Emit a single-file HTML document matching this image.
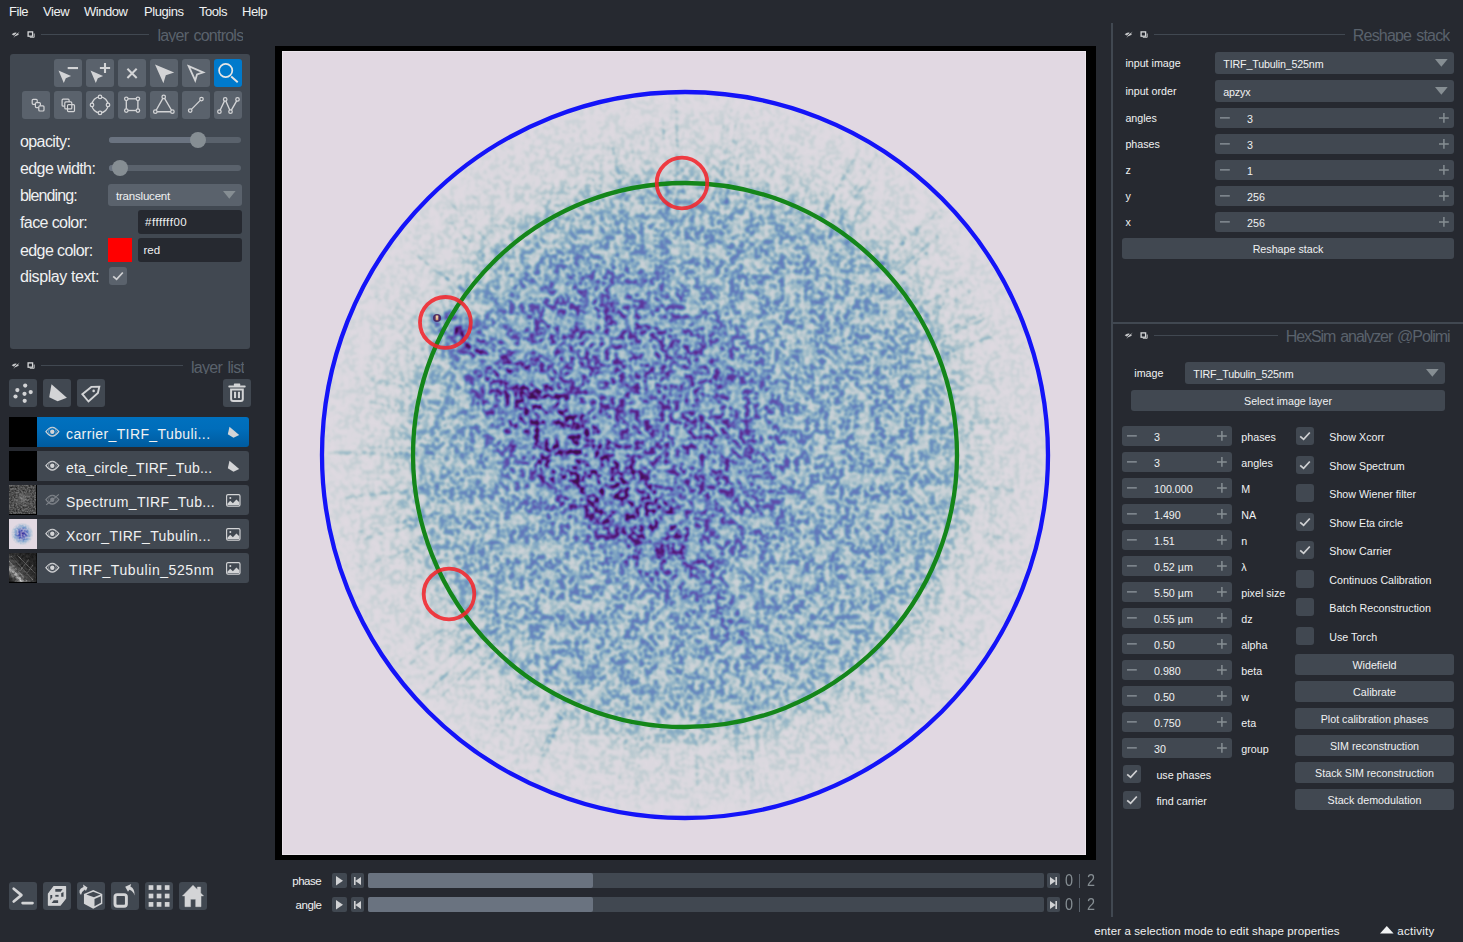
<!DOCTYPE html>
<html lang="en">
<head>
<meta charset="utf-8">
<title>napari</title>
<style>
*{box-sizing:border-box;margin:0;padding:0}
html,body{width:1463px;height:942px;overflow:hidden;background:#262930}
body{position:relative;font-family:"Liberation Sans",sans-serif;color:#f0f1f2;font-size:10.7px}
.a{position:absolute}
.t{position:absolute;white-space:nowrap;line-height:1}
.menu{font-size:13px;top:5px}
.dock{font-size:15.5px;color:#5a626c;overflow:hidden;text-align:right}
.dock span{position:absolute;right:0;top:0;white-space:nowrap;line-height:1}
.hl{background:#414851;height:1px}
.fg{background:#414851;border-radius:3px}
.pb{background:#5a626c;border-radius:3px;width:28px;height:28px}
.lb{font-size:16px;left:20px;letter-spacing:-.6px}
.sm{font-size:12px}
.row{left:37px;width:212px;height:30px;background:#414851;border-radius:0 3px 3px 0}
.row .t{font-size:14px;letter-spacing:.3px;top:8px;left:29px}
.th{left:9px;width:28px;height:30px;background:#000}
.spin,.cmb,.btn{background:#414851;border-radius:3px}
.btn{text-align:center}
.cb{background:#414851;border-radius:3px;width:18px;height:18px}
svg{position:absolute;overflow:visible}
</style>
</head>
<body>

<div class="t " style="left:9px;top:5.3px;font-size:13px;letter-spacing:-.45px">File</div>
<div class="t " style="left:43px;top:5.3px;font-size:13px;letter-spacing:-.45px">View</div>
<div class="t " style="left:84px;top:5.3px;font-size:13px;letter-spacing:-.45px">Window</div>
<div class="t " style="left:144px;top:5.3px;font-size:13px;letter-spacing:-.45px">Plugins</div>
<div class="t " style="left:199px;top:5.3px;font-size:13px;letter-spacing:-.45px">Tools</div>
<div class="t " style="left:242px;top:5.3px;font-size:13px;letter-spacing:-.45px">Help</div>
<div class="a dock" style="left:-16.599999999999994px;top:26px;width:260px;height:15.5px;font-size:16px;letter-spacing:-0.76px"><span style="top:1.6px;word-spacing:1.5px">layer controls</span></div>
<div class="a hl" style="left:41px;top:34px;width:108px;height:1px;"></div>
<svg style="left:12px;top:30.5px" width="24" height="8" viewBox="0 0 24 8"><path d="M-.3 3.3Q3.4 -.4 7 3.3Q3.4 6.6 -.3 3.3Z" fill="#c4c5c7"/><path d="M.8 5.9L6.4 .9" stroke="#262930" stroke-width=".8"/><path d="M1.8 6.3L7.2 1.3" stroke="#c4c5c7" stroke-width=".6"/><rect x="16.1" y=".9" width="4.5" height="4.3" fill="none" stroke="#d6d7d9" stroke-width="1.3"/><path d="M17.8 6.3H22.2V2.5" fill="none" stroke="#c0c1c3" stroke-width="1"/></svg>
<div class="a dock" style="left:-15.800000000000011px;top:358px;width:260px;height:15.5px;font-size:16px;letter-spacing:-0.7px"><span style="top:1.6px;word-spacing:1.5px">layer list</span></div>
<div class="a hl" style="left:41px;top:365px;width:142px;height:1px;"></div>
<svg style="left:12px;top:361.5px" width="24" height="8" viewBox="0 0 24 8"><path d="M-.3 3.3Q3.4 -.4 7 3.3Q3.4 6.6 -.3 3.3Z" fill="#c4c5c7"/><path d="M.8 5.9L6.4 .9" stroke="#262930" stroke-width=".8"/><path d="M1.8 6.3L7.2 1.3" stroke="#c4c5c7" stroke-width=".6"/><rect x="16.1" y=".9" width="4.5" height="4.3" fill="none" stroke="#d6d7d9" stroke-width="1.3"/><path d="M17.8 6.3H22.2V2.5" fill="none" stroke="#c0c1c3" stroke-width="1"/></svg>
<div class="a dock" style="left:1189.5px;top:26.6px;width:260px;height:15.5px;font-size:16px;letter-spacing:-0.82px"><span style="top:1.6px;word-spacing:1.5px">Reshape stack</span></div>
<div class="a hl" style="left:1154px;top:34px;width:191px;height:1px;"></div>
<svg style="left:1124.5px;top:30.5px" width="24" height="8" viewBox="0 0 24 8"><path d="M-.3 3.3Q3.4 -.4 7 3.3Q3.4 6.6 -.3 3.3Z" fill="#c4c5c7"/><path d="M.8 5.9L6.4 .9" stroke="#262930" stroke-width=".8"/><path d="M1.8 6.3L7.2 1.3" stroke="#c4c5c7" stroke-width=".6"/><rect x="16.1" y=".9" width="4.5" height="4.3" fill="none" stroke="#d6d7d9" stroke-width="1.3"/><path d="M17.8 6.3H22.2V2.5" fill="none" stroke="#c0c1c3" stroke-width="1"/></svg>
<div class="a dock" style="left:1189.5px;top:327.8px;width:260px;height:15.5px;font-size:16px;letter-spacing:-1.06px"><span style="top:1.6px;word-spacing:1.5px">HexSim analyzer @Polimi</span></div>
<div class="a hl" style="left:1154px;top:335px;width:124px;height:1px;"></div>
<svg style="left:1124.5px;top:331.5px" width="24" height="8" viewBox="0 0 24 8"><path d="M-.3 3.3Q3.4 -.4 7 3.3Q3.4 6.6 -.3 3.3Z" fill="#c4c5c7"/><path d="M.8 5.9L6.4 .9" stroke="#262930" stroke-width=".8"/><path d="M1.8 6.3L7.2 1.3" stroke="#c4c5c7" stroke-width=".6"/><rect x="16.1" y=".9" width="4.5" height="4.3" fill="none" stroke="#d6d7d9" stroke-width="1.3"/><path d="M17.8 6.3H22.2V2.5" fill="none" stroke="#c0c1c3" stroke-width="1"/></svg>
<div class="a fg" style="left:10px;top:54px;width:240px;height:295px;"></div>
<div class="a pb" style="left:54px;top:59px;width:28px;height:28px;"><svg width="28" height="28" viewBox="0 0 28 28" style="left:0;top:0" ><path d="M4.5 11.5L17.1 17L11.8 19.2L9.8 24Z" fill="#d3d4d6"/><rect x="13.7" y="8" width="10.3" height="2.1" fill="#d3d4d6"/></svg></div>
<div class="a pb" style="left:86px;top:59px;width:28px;height:28px;"><svg width="28" height="28" viewBox="0 0 28 28" style="left:0;top:0" ><path d="M4.5 11.5L17.1 17L11.8 19.2L9.8 24Z" fill="#d3d4d6"/><path d="M13.9 9.05H24.1M19 4V14.1" stroke="#d3d4d6" stroke-width="2.1" fill="none"/></svg></div>
<div class="a pb" style="left:118px;top:59px;width:28px;height:28px;"><svg width="28" height="28" viewBox="0 0 28 28" style="left:0;top:0" ><path d="M9.4 9.7L18.7 19M18.7 9.7L9.4 19" stroke="#d3d4d6" stroke-width="2" fill="none"/></svg></div>
<div class="a pb" style="left:150px;top:59px;width:28px;height:28px;"><svg width="28" height="28" viewBox="0 0 28 28" style="left:0;top:0" ><path d="M5 5.4L24.2 13.4L15.8 16.2L13.4 24.2Z" fill="#d3d4d6"/></svg></div>
<div class="a pb" style="left:182px;top:59px;width:28px;height:28px;"><svg width="28" height="28" viewBox="0 0 28 28" style="left:0;top:0" ><path d="M6.7 7.2L21.2 13.3L15 15.4L13.2 21.4Z" fill="none" stroke="#d3d4d6" stroke-width="1.8" stroke-linejoin="miter"/></svg></div>
<div class="a pb" style="left:214px;top:59px;width:28px;height:28px;background:#007acc"><svg width="28" height="28" viewBox="0 0 28 28" style="left:0;top:0" ><circle cx="11.7" cy="11.55" r="6.6" fill="none" stroke="#e6e6e6" stroke-width="1.7"/><path d="M17.2 17.5L23.7 23.3" stroke="#e6e6e6" stroke-width="1.9"/></svg></div>
<div class="a pb" style="left:22px;top:91px;width:28px;height:28px;"><svg width="28" height="28" viewBox="0 0 28 28" style="left:0;top:0" ><rect x="10.2" y="8.3" width="5" height="5" rx="1" fill="#5a626c" stroke="#d3d4d6" stroke-width="1.2"/><rect x="13.4" y="11.6" width="5" height="5" rx="1" fill="#5a626c" stroke="#d3d4d6" stroke-width="1.2"/><rect x="16.8" y="14.8" width="5.2" height="5.2" rx="1" fill="#5a626c" stroke="#d3d4d6" stroke-width="1.2"/></svg></div>
<div class="a pb" style="left:54px;top:91px;width:28px;height:28px;"><svg width="28" height="28" viewBox="0 0 28 28" style="left:0;top:0" ><rect x="8.1" y="8.2" width="7" height="7" rx="1" fill="#5a626c" stroke="#d3d4d6" stroke-width="1.2"/><rect x="10.8" y="10.9" width="7" height="7" rx="1" fill="#4a515a" stroke="#d3d4d6" stroke-width="1.2"/><rect x="13.5" y="13.6" width="7" height="7" rx="1" fill="none" stroke="#d3d4d6" stroke-width="1.2"/></svg></div>
<div class="a pb" style="left:86px;top:91px;width:28px;height:28px;"><svg width="28" height="28" viewBox="0 0 28 28" style="left:0;top:0" ><circle cx="14" cy="13.9" r="8" fill="none" stroke="#d3d4d6" stroke-width="1.35"/><circle cx="14" cy="5.9" r="1.75" fill="#5a626c" stroke="#d3d4d6" stroke-width="1.25"/><circle cx="6" cy="13.9" r="1.75" fill="#5a626c" stroke="#d3d4d6" stroke-width="1.25"/><circle cx="22" cy="13.9" r="1.75" fill="#5a626c" stroke="#d3d4d6" stroke-width="1.25"/><circle cx="14" cy="21.9" r="1.75" fill="#5a626c" stroke="#d3d4d6" stroke-width="1.25"/></svg></div>
<div class="a pb" style="left:118px;top:91px;width:28px;height:28px;"><svg width="28" height="28" viewBox="0 0 28 28" style="left:0;top:0" ><rect x="8.3" y="7.8" width="11.6" height="11.7" fill="none" stroke="#d3d4d6" stroke-width="1.35"/><circle cx="8.3" cy="7.8" r="1.75" fill="#5a626c" stroke="#d3d4d6" stroke-width="1.25"/><circle cx="19.9" cy="7.8" r="1.75" fill="#5a626c" stroke="#d3d4d6" stroke-width="1.25"/><circle cx="8.3" cy="19.5" r="1.75" fill="#5a626c" stroke="#d3d4d6" stroke-width="1.25"/><circle cx="19.9" cy="19.5" r="1.75" fill="#5a626c" stroke="#d3d4d6" stroke-width="1.25"/></svg></div>
<div class="a pb" style="left:150px;top:91px;width:28px;height:28px;"><svg width="28" height="28" viewBox="0 0 28 28" style="left:0;top:0" ><path d="M13.7 5.9L5.3 20.7H22.4Z" fill="none" stroke="#d3d4d6" stroke-width="1.35"/><circle cx="13.7" cy="5.9" r="1.75" fill="#5a626c" stroke="#d3d4d6" stroke-width="1.25"/><circle cx="5.3" cy="20.7" r="1.75" fill="#5a626c" stroke="#d3d4d6" stroke-width="1.25"/><circle cx="22.4" cy="20.7" r="1.75" fill="#5a626c" stroke="#d3d4d6" stroke-width="1.25"/></svg></div>
<div class="a pb" style="left:182px;top:91px;width:28px;height:28px;"><svg width="28" height="28" viewBox="0 0 28 28" style="left:0;top:0" ><path d="M19.5 8.1L8.2 19.6" fill="none" stroke="#d3d4d6" stroke-width="1.35"/><circle cx="19.5" cy="8.1" r="1.75" fill="#5a626c" stroke="#d3d4d6" stroke-width="1.25"/><circle cx="8.2" cy="19.6" r="1.75" fill="#5a626c" stroke="#d3d4d6" stroke-width="1.25"/></svg></div>
<div class="a pb" style="left:214px;top:91px;width:28px;height:28px;"><svg width="28" height="28" viewBox="0 0 28 28" style="left:0;top:0" ><path d="M5.4 20.7L11.2 8.4L16.5 20.7L23.5 8.4" fill="none" stroke="#d3d4d6" stroke-width="1.35"/><circle cx="5.4" cy="20.7" r="1.75" fill="#5a626c" stroke="#d3d4d6" stroke-width="1.25"/><circle cx="11.2" cy="8.4" r="1.75" fill="#5a626c" stroke="#d3d4d6" stroke-width="1.25"/><circle cx="16.5" cy="20.7" r="1.75" fill="#5a626c" stroke="#d3d4d6" stroke-width="1.25"/><circle cx="23.5" cy="8.4" r="1.75" fill="#5a626c" stroke="#d3d4d6" stroke-width="1.25"/></svg></div>
<div class="t " style="left:20px;top:133.5px;font-size:16px;letter-spacing:-.6px">opacity:</div>
<div class="t " style="left:20px;top:160.7px;font-size:16px;letter-spacing:-.6px">edge width:</div>
<div class="t " style="left:20px;top:188.1px;font-size:16px;letter-spacing:-.92px">blending:</div>
<div class="t " style="left:20px;top:214.9px;font-size:16px;letter-spacing:-.6px">face color:</div>
<div class="t " style="left:20px;top:243.0px;font-size:16px;letter-spacing:-.6px">edge color:</div>
<div class="t " style="left:20px;top:269.0px;font-size:16px;letter-spacing:-.42px">display text:</div>
<div class="a " style="left:109px;top:137px;width:132px;height:6px;background:#5a626c;border-radius:3px"></div>
<div class="a " style="left:109px;top:137px;width:89px;height:6px;background:#6a7380;border-radius:3px"></div>
<div class="a " style="left:190px;top:132px;width:16px;height:16px;background:#868e93;border-radius:8px"></div>
<div class="a " style="left:109px;top:165px;width:132px;height:6px;background:#5a626c;border-radius:3px"></div>
<div class="a " style="left:109px;top:165px;width:11px;height:6px;background:#6a7380;border-radius:3px"></div>
<div class="a " style="left:112px;top:160px;width:16px;height:16px;background:#868e93;border-radius:8px"></div>
<div class="a " style="left:108px;top:184px;width:134px;height:22px;background:#5a626c;border-radius:3px"></div>
<div class="t " style="left:116px;top:190.5px;font-size:11.5px;letter-spacing:-.2px">translucent</div>
<svg style="left:223px;top:191px" width="13" height="8"><path d="M0 0H12.6L6.3 7.7Z" fill="#868e93"/></svg>
<div class="a " style="left:138px;top:210px;width:104px;height:24px;background:#262930;border-radius:3px"></div>
<div class="t " style="left:145px;top:217.2px;font-size:11.5px;letter-spacing:.55px">#ffffff00</div>
<div class="a " style="left:108px;top:238px;width:24px;height:24px;background:#ff0000"></div>
<div class="a " style="left:138px;top:238px;width:104px;height:24px;background:#262930;border-radius:3px"></div>
<div class="t " style="left:143.5px;top:245.2px;font-size:11.5px;">red</div>
<div class="a " style="left:109px;top:267px;width:18px;height:18px;background:#5a626c;border-radius:3px"><svg style="left:3px;top:4px" width="12" height="10"><path d="M1.2 5.3L4.6 8.3L10.8 1.5" fill="none" stroke="#d0d1d3" stroke-width="1.75"/></svg></div>
<div class="a fg" style="left:9px;top:379px;width:28px;height:28px;"><svg width="28" height="28" viewBox="0 0 28 28" style="left:0;top:0" ><circle cx="16.2" cy="6.6" r="2.1" fill="#d3d4d6"/><circle cx="8.35" cy="11.1" r="2.1" fill="#d3d4d6"/><circle cx="21.7" cy="13.1" r="2.1" fill="#d3d4d6"/><circle cx="15.5" cy="14.8" r="2.1" fill="#d3d4d6"/><circle cx="6.5" cy="17.5" r="2.1" fill="#d3d4d6"/><circle cx="15.7" cy="21.8" r="2.1" fill="#d3d4d6"/></svg></div>
<div class="a fg" style="left:43px;top:379px;width:28px;height:28px;"><svg width="28" height="28" viewBox="0 0 28 28" style="left:0;top:0" ><path d="M8.5 5.2L23.9 18.8L14.6 22.2L6.2 18.3Z" fill="#d3d4d6"/></svg></div>
<div class="a fg" style="left:77px;top:379px;width:28px;height:28px;"><svg width="28" height="28" viewBox="0 0 28 28" style="left:0;top:0" ><path d="M5.3 15.2L14.3 7.9L22.3 7.8L20.9 14L11.5 22.5Z" fill="none" stroke="#d3d4d6" stroke-width="1.9" stroke-linejoin="miter"/><circle cx="16.65" cy="11.9" r="1.3" fill="#d3d4d6"/></svg></div>
<div class="a fg" style="left:223px;top:379px;width:28px;height:28px;"><svg width="28" height="28" viewBox="0 0 28 28" style="left:0;top:0" ><rect x="10.9" y="4.6" width="6.3" height="2.4" rx=".6" fill="#d3d4d6"/><rect x="5.3" y="6.6" width="17.4" height="1.9" rx=".9" fill="#d3d4d6"/><path d="M8.1 10.4H19.8V19.9Q19.8 21.9 17.8 21.9H10.1Q8.1 21.9 8.1 19.9Z" fill="none" stroke="#d3d4d6" stroke-width="2"/><rect x="11" y="12.8" width="2.1" height="6.3" fill="#d3d4d6"/><rect x="14.9" y="12.8" width="2.1" height="6.3" fill="#d3d4d6"/></svg></div>
<div class="a " style="left:9px;top:417px;width:28px;height:30px;background:#000"><!--th0--></div>
<div class="a row" style="top:417px;background:linear-gradient(#0071bf,#006dba 40%,#005b9f)"><div class="t" style="left:29px;top:9.7px;letter-spacing:0.4px">carrier_TIRF_Tubuli...</div><svg width="16" height="12" viewBox="0 0 16 12" style="left:7.5px;top:9.2px;opacity:1"><path d="M0.9 5.7Q7.3 -3.2 13.8 5.7Q7.3 14.6 0.9 5.7Z" fill="none" stroke="#d3d4d6" stroke-width="1.15"/><circle cx="7.35" cy="5.7" r="3.9" fill="none" stroke="#d3d4d6" stroke-width=".8" opacity=".6"/><circle cx="7.3" cy="5.8" r="2.2" fill="#d3d4d6"/></svg><svg width="14" height="13" viewBox="0 0 14 13" style="left:190px;top:8.5px"><path d="M2.5 .8L12.2 8.9L6.5 11.7L.8 8.3Z" fill="#d3d4d6"/></svg></div>
<div class="a " style="left:9px;top:451px;width:28px;height:30px;background:#000"><!--th1--></div>
<div class="a row" style="top:451px;"><div class="t" style="left:29px;top:9.7px;letter-spacing:0.2px">eta_circle_TIRF_Tub...</div><svg width="16" height="12" viewBox="0 0 16 12" style="left:7.5px;top:9.2px;opacity:1"><path d="M0.9 5.7Q7.3 -3.2 13.8 5.7Q7.3 14.6 0.9 5.7Z" fill="none" stroke="#d3d4d6" stroke-width="1.15"/><circle cx="7.35" cy="5.7" r="3.9" fill="none" stroke="#d3d4d6" stroke-width=".8" opacity=".6"/><circle cx="7.3" cy="5.8" r="2.2" fill="#d3d4d6"/></svg><svg width="14" height="13" viewBox="0 0 14 13" style="left:190px;top:8.5px"><path d="M2.5 .8L12.2 8.9L6.5 11.7L.8 8.3Z" fill="#d3d4d6"/></svg></div>
<div class="a " style="left:9px;top:485px;width:28px;height:30px;background:#000"><svg width="28" height="30" viewBox="0 0 28 30" style="left:0;top:0"><defs>
<filter id="fS" x="0" y="0" width="100%" height="100%" color-interpolation-filters="sRGB"><feTurbulence type="fractalNoise" baseFrequency=".55" numOctaves="2" seed="5"/><feColorMatrix type="matrix" values=".55 0 0 0 .03 .55 0 0 0 .03 .55 0 0 0 .03 0 0 0 0 1"/></filter>
<radialGradient id="gS" cx=".5" cy=".48" r=".5"><stop offset="0" stop-color="#aaa" stop-opacity=".55"/><stop offset=".3" stop-color="#888" stop-opacity=".22"/><stop offset="1" stop-color="#555" stop-opacity="0"/></radialGradient></defs>
<rect width="27" height="28.6" filter="url(#fS)"/><rect width="27" height="28.6" fill="url(#gS)"/></svg></div>
<div class="a row" style="top:485px;"><div class="t" style="left:29px;top:9.7px;letter-spacing:0.36px">Spectrum_TIRF_Tub...</div><svg width="16" height="12" viewBox="0 0 16 12" style="left:7.5px;top:9.2px;opacity:0.42"><path d="M0.9 5.7Q7.3 -3.2 13.8 5.7Q7.3 14.6 0.9 5.7Z" fill="none" stroke="#d3d4d6" stroke-width="1.15"/><circle cx="7.35" cy="5.7" r="3.9" fill="none" stroke="#d3d4d6" stroke-width=".8" opacity=".6"/><circle cx="7.3" cy="5.8" r="2.2" fill="#d3d4d6"/><path d="M1.2 10.8L13.8 .4" stroke="#d3d4d6" stroke-width="1.1"/></svg><svg width="15" height="13" viewBox="0 0 15 13" style="left:188.6px;top:8.6px"><rect x=".6" y=".6" width="13.4" height="11.6" rx="1.4" fill="none" stroke="#d3d4d6" stroke-width="1.15"/><circle cx="4.3" cy="3.9" r="1" fill="#d3d4d6"/><path d="M1.4 11.2V9.8L4.2 6.8L6.9 9.2L10.4 5.4L13.3 8.3V11.2Z" fill="#d3d4d6"/></svg></div>
<div class="a " style="left:9px;top:519px;width:28px;height:30px;background:#000"><svg width="28" height="30" viewBox="0 0 28 30" style="left:0;top:0"><defs>
<filter id="fX" x="0" y="0" width="100%" height="100%" color-interpolation-filters="sRGB"><feTurbulence type="fractalNoise" baseFrequency=".5" numOctaves="2" seed="8" result="n"/><feColorMatrix in="n" type="matrix" values="0 0 0 0 0 0 0 0 0 0 0 0 0 0 0 3 0 0 0 -1.0" result="a"/><feComposite in="SourceGraphic" in2="a" operator="in"/></filter>
<radialGradient id="gX" cx=".48" cy=".5" r=".5"><stop offset="0" stop-color="#3a2a98"/><stop offset=".35" stop-color="#4a5ab8"/><stop offset=".65" stop-color="#7aa2cc" stop-opacity=".9"/><stop offset="1" stop-color="#a5c4d4" stop-opacity="0"/></radialGradient></defs>
<rect width="28" height="30" fill="#e2d9e2"/><circle cx="13.6" cy="15" r="11.5" fill="url(#gX)" opacity=".45"/><circle cx="13.6" cy="15" r="11.5" fill="url(#gX)" filter="url(#fX)"/></svg></div>
<div class="a row" style="top:519px;"><div class="t" style="left:29px;top:9.7px;letter-spacing:0.37px">Xcorr_TIRF_Tubulin...</div><svg width="16" height="12" viewBox="0 0 16 12" style="left:7.5px;top:9.2px;opacity:1"><path d="M0.9 5.7Q7.3 -3.2 13.8 5.7Q7.3 14.6 0.9 5.7Z" fill="none" stroke="#d3d4d6" stroke-width="1.15"/><circle cx="7.35" cy="5.7" r="3.9" fill="none" stroke="#d3d4d6" stroke-width=".8" opacity=".6"/><circle cx="7.3" cy="5.8" r="2.2" fill="#d3d4d6"/></svg><svg width="15" height="13" viewBox="0 0 15 13" style="left:188.6px;top:8.6px"><rect x=".6" y=".6" width="13.4" height="11.6" rx="1.4" fill="none" stroke="#d3d4d6" stroke-width="1.15"/><circle cx="4.3" cy="3.9" r="1" fill="#d3d4d6"/><path d="M1.4 11.2V9.8L4.2 6.8L6.9 9.2L10.4 5.4L13.3 8.3V11.2Z" fill="#d3d4d6"/></svg></div>
<div class="a " style="left:9px;top:553px;width:28px;height:30px;background:#000"><svg width="28" height="30" viewBox="0 0 28 30" style="left:0;top:0"><defs>
<linearGradient id="gT" x1="1" y1="0" x2="0" y2="1"><stop offset="0" stop-color="#1a1a1a"/><stop offset=".5" stop-color="#2e2e2e"/><stop offset=".78" stop-color="#777"/><stop offset=".9" stop-color="#333"/><stop offset="1" stop-color="#0c0c0c"/></linearGradient>
<filter id="fT" x="0" y="0" width="100%" height="100%" color-interpolation-filters="sRGB"><feTurbulence type="fractalNoise" baseFrequency=".4" numOctaves="2" seed="2" result="n"/><feColorMatrix in="n" type="matrix" values=".9 0 0 0 .1 .9 0 0 0 .1 .9 0 0 0 .1 0 0 0 0 1" result="g"/><feComposite in="SourceGraphic" in2="g" operator="arithmetic" k1="1.3" k2=".3"/></filter></defs>
<g filter="url(#fT)"><rect width="27.4" height="29" fill="url(#gT)"/><g stroke="#aaa" stroke-width=".7" opacity=".5"><path d="M0 8L18 28M2 3L24 27M8 2L26 20M20 6L11 18M24 12L18 20"/></g><path d="M0 14L14 29" stroke="#ccc" stroke-width="2.5" opacity=".5"/></g></svg></div>
<div class="a row" style="top:553px;"><div class="t" style="left:32px;top:9.7px;letter-spacing:0.58px">TIRF_Tubulin_525nm</div><svg width="16" height="12" viewBox="0 0 16 12" style="left:7.5px;top:9.2px;opacity:1"><path d="M0.9 5.7Q7.3 -3.2 13.8 5.7Q7.3 14.6 0.9 5.7Z" fill="none" stroke="#d3d4d6" stroke-width="1.15"/><circle cx="7.35" cy="5.7" r="3.9" fill="none" stroke="#d3d4d6" stroke-width=".8" opacity=".6"/><circle cx="7.3" cy="5.8" r="2.2" fill="#d3d4d6"/></svg><svg width="15" height="13" viewBox="0 0 15 13" style="left:188.6px;top:8.6px"><rect x=".6" y=".6" width="13.4" height="11.6" rx="1.4" fill="none" stroke="#d3d4d6" stroke-width="1.15"/><circle cx="4.3" cy="3.9" r="1" fill="#d3d4d6"/><path d="M1.4 11.2V9.8L4.2 6.8L6.9 9.2L10.4 5.4L13.3 8.3V11.2Z" fill="#d3d4d6"/></svg></div>
<div class="a fg" style="left:9px;top:882px;width:28px;height:28px;"><svg width="28" height="28" viewBox="0 0 28 28" style="left:0;top:0" ><path d="M4.7 6.7L12.4 13.1L4.7 19.5M13.6 21.1H23.5" fill="none" stroke="#d3d4d6" stroke-width="2.7" stroke-linecap="round" stroke-linejoin="round"/></svg></div>
<div class="a fg" style="left:43px;top:882px;width:28px;height:28px;"><svg width="28" height="28" viewBox="0 0 28 28" style="left:0;top:0" ><path d="M5.5 11.8L10.9 4.6H22.5V16.4L17.2 23.2H5.5Z" fill="#d3d4d6" stroke="#d3d4d6" stroke-width="1.3" stroke-linejoin="round"/><g fill="#414851"><path d="M12.3 7H19.6L17.7 9.7H12.3Z"/><path d="M12.3 12.9H15.6V14.7H12.3Z"/><path d="M18.2 11.3L20.5 10V14.7H18.2Z"/><path d="M7.3 13.1H9.2V15.2L7.3 18.3Z"/><path d="M10.7 18.2H15.1V21.1H8.6Z"/></g></svg></div>
<div class="a fg" style="left:77px;top:882px;width:28px;height:28px;"><svg width="28" height="28" viewBox="0 0 28 28" style="left:0;top:0" ><path d="M6.95 12L16.25 8L25.3 12V21.7L16.25 26.8L6.95 21.7Z" fill="#d3d4d6"/><path d="M16.25 9.85L23.5 12.4L16.95 15.2L9.3 12.4Z" fill="#414851"/><path d="M17.5 17.05L23.9 14.3V20.8L17.5 24.3Z" fill="#414851"/><path d="M4 13Q-.2 7.6 6.5 4.9L6 2.5L10.5 5.5L8.9 9L7.9 7.4Q5 9 4 13Z" fill="#d3d4d6"/></svg></div>
<div class="a fg" style="left:111px;top:882px;width:28px;height:28px;"><svg width="28" height="28" viewBox="0 0 28 28" style="left:0;top:0" ><rect x="4" y="12.6" width="11.4" height="11.6" rx="2.2" fill="none" stroke="#d3d4d6" stroke-width="2.9"/><path d="M23.6 13.4Q22 8.8 18.4 7.8L17 9.8L14.2 4.8L20.2 2L19.4 4.6Q23.8 6.6 23.6 13.4Z" fill="#d3d4d6"/></svg></div>
<div class="a fg" style="left:145px;top:882px;width:28px;height:28px;"><svg width="28" height="28" viewBox="0 0 28 28" style="left:0;top:0" ><rect x="3.65" y="3.2" width="4.7" height="4.7" fill="#d3d4d6"/><rect x="3.65" y="11.65" width="4.7" height="4.7" fill="#d3d4d6"/><rect x="3.65" y="20.05" width="4.7" height="4.7" fill="#d3d4d6"/><rect x="11.7" y="3.2" width="4.7" height="4.7" fill="#d3d4d6"/><rect x="11.7" y="11.65" width="4.7" height="4.7" fill="#d3d4d6"/><rect x="11.7" y="20.05" width="4.7" height="4.7" fill="#d3d4d6"/><rect x="19.8" y="3.2" width="4.7" height="4.7" fill="#d3d4d6"/><rect x="19.8" y="11.65" width="4.7" height="4.7" fill="#d3d4d6"/><rect x="19.8" y="20.05" width="4.7" height="4.7" fill="#d3d4d6"/></svg></div>
<div class="a fg" style="left:179px;top:882px;width:28px;height:28px;"><svg width="28" height="28" viewBox="0 0 28 28" style="left:0;top:0" ><path d="M14 3.2L18.3 7.5V5H21.7V11L24.6 13.95H22.05V24.7H16.65V17.2H11.6V24.7H5.9V13.95H3.4Z" fill="#d3d4d6" stroke="#d3d4d6" stroke-width=".4" stroke-linejoin="round"/></svg></div>
<div class="a " style="left:275px;top:46px;width:821px;height:814px;background:#000"></div>
<svg style="left:282px;top:51px;overflow:hidden" width="804" height="804" viewBox="282 51 804 804">
<defs>
<radialGradient id="gHaze" cx="685" cy="455" r="372" gradientUnits="userSpaceOnUse">
<stop offset="0" stop-color="#fff" stop-opacity=".125"/>
<stop offset=".54" stop-color="#fff" stop-opacity=".12"/>
<stop offset=".63" stop-color="#fff" stop-opacity=".112"/>
<stop offset=".70" stop-color="#fff" stop-opacity=".095"/>
<stop offset=".753" stop-color="#fff" stop-opacity=".068"/>
<stop offset=".806" stop-color="#fff" stop-opacity=".039"/>
<stop offset=".914" stop-color="#fff" stop-opacity=".028"/>
<stop offset=".974" stop-color="#fff" stop-opacity=".02"/>
<stop offset=".978" stop-color="#fff" stop-opacity="0"/>
</radialGradient>
<radialGradient id="gBlob">
<stop offset="0" stop-color="#fff" stop-opacity=".085"/>
<stop offset=".6" stop-color="#fff" stop-opacity=".078"/>
<stop offset=".85" stop-color="#fff" stop-opacity=".04"/>
<stop offset="1" stop-color="#fff" stop-opacity="0"/>
</radialGradient>
<radialGradient id="gRidge">
<stop offset="0" stop-color="#fff" stop-opacity=".05"/>
<stop offset=".6" stop-color="#fff" stop-opacity=".045"/>
<stop offset=".85" stop-color="#fff" stop-opacity=".035"/>
<stop offset="1" stop-color="#fff" stop-opacity="0"/>
</radialGradient>
<radialGradient id="gPk">
<stop offset="0" stop-color="#fff" stop-opacity=".17"/>
<stop offset=".4" stop-color="#fff" stop-opacity=".09"/>
<stop offset="1" stop-color="#fff" stop-opacity="0"/>
</radialGradient>
<filter id="tw" x="274" y="43" width="820" height="820" filterUnits="userSpaceOnUse" color-interpolation-filters="sRGB">
<feTurbulence type="fractalNoise" baseFrequency="0.2" numOctaves="2" seed="3" result="n"/>
<feTurbulence type="fractalNoise" baseFrequency="0.07" numOctaves="2" seed="11" result="c"/>
<feColorMatrix in="n" type="matrix" values="2.7 0 0 0 -0.85  2.7 0 0 0 -0.85  2.7 0 0 0 -0.85  0 0 0 0 1" result="ng"/>
<feColorMatrix in="c" type="matrix" values="2.4 0 0 0 -0.7  2.4 0 0 0 -0.7  2.4 0 0 0 -0.7  0 0 0 0 1" result="cg"/>
<feComponentTransfer in="ng" result="ngg"><feFuncR type="gamma" exponent="1.45"/><feFuncG type="gamma" exponent="1.45"/><feFuncB type="gamma" exponent="1.45"/></feComponentTransfer>
<feComposite in="ngg" in2="cg" operator="arithmetic" k1="1.5" k2=".35" k3=".1" k4="0" result="nn"/>
<feComposite in="SourceGraphic" in2="nn" operator="arithmetic" k1="3.3" k2="0.75" k3="0" k4="0" result="m0"/>
<feGaussianBlur in="m0" stdDeviation="0.9" result="m"/>
<feComponentTransfer in="m">
<feFuncR type="table" tableValues="0.886 0.872 0.855 0.828 0.800 0.768 0.727 0.691 0.650 0.615 0.583 0.548 0.520 0.495 0.468 0.448 0.428 0.414 0.402 0.391 0.384 0.379 0.375 0.373 0.371 0.370 0.368 0.366 0.363 0.358 0.351 0.341 0.327 0.311 0.293 0.270 0.250 0.231 0.212 0.200 0.185"/>
<feFuncG type="table" tableValues="0.850 0.852 0.848 0.837 0.825 0.810 0.790 0.772 0.750 0.730 0.710 0.685 0.664 0.642 0.615 0.592 0.565 0.541 0.516 0.487 0.461 0.435 0.404 0.377 0.345 0.316 0.288 0.254 0.226 0.198 0.166 0.141 0.116 0.099 0.086 0.075 0.070 0.067 0.066 0.069 0.079"/>
<feFuncB type="table" tableValues="0.888 0.882 0.873 0.859 0.846 0.833 0.817 0.805 0.794 0.786 0.779 0.773 0.768 0.764 0.759 0.756 0.751 0.747 0.743 0.737 0.731 0.724 0.714 0.704 0.691 0.677 0.661 0.640 0.619 0.594 0.561 0.529 0.487 0.447 0.407 0.361 0.324 0.291 0.258 0.235 0.213"/>
</feComponentTransfer>
</filter>
</defs>
<g filter="url(#tw)">
<rect x="274" y="43" width="820" height="820" fill="#000"/>
<circle cx="685" cy="455" r="372" fill="url(#gHaze)"/>
<g stroke="#fff" stroke-linecap="round"><path d="M526 644L464 717" stroke-opacity="0.014" stroke-width="2.8"/><path d="M521 634L458 703" stroke-opacity="0.013" stroke-width="2.6"/><path d="M578 675L539 755" stroke-opacity="0.031" stroke-width="1.8"/><path d="M533 676L483 748" stroke-opacity="0.025" stroke-width="2.5"/><path d="M449 511L343 536" stroke-opacity="0.019" stroke-width="1.9"/><path d="M563 678L517 762" stroke-opacity="0.016" stroke-width="3.0"/><path d="M468 592L399 636" stroke-opacity="0.013" stroke-width="1.6"/><path d="M536 681L501 733" stroke-opacity="0.019" stroke-width="3.0"/><path d="M498 627L428 691" stroke-opacity="0.028" stroke-width="2.1"/><path d="M471 609L399 661" stroke-opacity="0.029" stroke-width="2.2"/><path d="M446 511L361 531" stroke-opacity="0.029" stroke-width="1.9"/><path d="M501 612L424 679" stroke-opacity="0.030" stroke-width="2.9"/><path d="M445 538L359 567" stroke-opacity="0.026" stroke-width="2.9"/><path d="M480 643L423 695" stroke-opacity="0.023" stroke-width="3.2"/><path d="M569 700L538 765" stroke-opacity="0.035" stroke-width="3.6"/><path d="M527 658L474 726" stroke-opacity="0.013" stroke-width="2.7"/><path d="M557 664L520 726" stroke-opacity="0.030" stroke-width="1.8"/><path d="M534 664L478 741" stroke-opacity="0.014" stroke-width="2.6"/><path d="M462 624L406 667" stroke-opacity="0.032" stroke-width="2.2"/><path d="M503 635L434 704" stroke-opacity="0.034" stroke-width="1.9"/><path d="M553 668L513 731" stroke-opacity="0.023" stroke-width="3.0"/><path d="M541 648L486 722" stroke-opacity="0.020" stroke-width="2.9"/><path d="M423 523L359 540" stroke-opacity="0.026" stroke-width="3.2"/><path d="M566 709L538 771" stroke-opacity="0.032" stroke-width="3.5"/><path d="M506 641L463 685" stroke-opacity="0.027" stroke-width="1.7"/><path d="M577 680L545 745" stroke-opacity="0.020" stroke-width="1.6"/><path d="M625 216L608 145" stroke-opacity="0.020" stroke-width="1.6"/><path d="M734 192L743 139" stroke-opacity="0.018" stroke-width="2.4"/><path d="M669 210L662 104" stroke-opacity="0.035" stroke-width="2.7"/><path d="M683 211L682 136" stroke-opacity="0.020" stroke-width="2.2"/><path d="M725 211L736 143" stroke-opacity="0.034" stroke-width="2.8"/><path d="M640 194L631 144" stroke-opacity="0.024" stroke-width="3.9"/><path d="M733 188L743 134" stroke-opacity="0.020" stroke-width="1.9"/><path d="M720 193L731 110" stroke-opacity="0.020" stroke-width="2.1"/><path d="M728 174L738 107" stroke-opacity="0.031" stroke-width="3.5"/><path d="M714 207L724 120" stroke-opacity="0.020" stroke-width="1.6"/><path d="M627 209L610 137" stroke-opacity="0.028" stroke-width="3.9"/><path d="M678 173L676 98" stroke-opacity="0.034" stroke-width="2.4"/><path d="M831 252L874 192" stroke-opacity="0.017" stroke-width="3.1"/><path d="M938 340L991 316" stroke-opacity="0.027" stroke-width="3.5"/><path d="M819 221L861 147" stroke-opacity="0.030" stroke-width="3.4"/><path d="M866 286L940 217" stroke-opacity="0.020" stroke-width="3.5"/><path d="M925 362L995 335" stroke-opacity="0.034" stroke-width="3.3"/><path d="M821 250L862 187" stroke-opacity="0.033" stroke-width="3.5"/><path d="M834 221L877 154" stroke-opacity="0.027" stroke-width="2.4"/><path d="M874 297L927 253" stroke-opacity="0.034" stroke-width="3.1"/><path d="M898 271L937 237" stroke-opacity="0.032" stroke-width="3.6"/><path d="M830 250L874 188" stroke-opacity="0.018" stroke-width="3.0"/><path d="M842 249L880 200" stroke-opacity="0.033" stroke-width="2.4"/><path d="M877 271L940 210" stroke-opacity="0.022" stroke-width="3.8"/><path d="M881 279L936 229" stroke-opacity="0.012" stroke-width="2.6"/><path d="M820 256L881 166" stroke-opacity="0.016" stroke-width="2.7"/><path d="M910 314L964 280" stroke-opacity="0.024" stroke-width="2.9"/><path d="M898 334L980 288" stroke-opacity="0.018" stroke-width="2.2"/><path d="M913 323L979 285" stroke-opacity="0.029" stroke-width="3.8"/><path d="M876 267L925 219" stroke-opacity="0.024" stroke-width="3.2"/><path d="M875 271L926 221" stroke-opacity="0.034" stroke-width="3.2"/><path d="M940 334L980 315" stroke-opacity="0.025" stroke-width="3.9"/><path d="M442 414L369 402" stroke-opacity="0.022" stroke-width="1.7"/><path d="M444 486L344 498" stroke-opacity="0.030" stroke-width="3.7"/><path d="M417 501L346 513" stroke-opacity="0.015" stroke-width="3.7"/><path d="M442 398L338 374" stroke-opacity="0.021" stroke-width="2.7"/><path d="M415 389L372 379" stroke-opacity="0.022" stroke-width="2.8"/><path d="M437 475L357 481" stroke-opacity="0.029" stroke-width="1.5"/><path d="M425 448L369 447" stroke-opacity="0.020" stroke-width="3.1"/><path d="M442 454L328 453" stroke-opacity="0.030" stroke-width="3.9"/><path d="M740 701L754 764" stroke-opacity="0.030" stroke-width="2.2"/><path d="M738 708L758 802" stroke-opacity="0.031" stroke-width="2.1"/><path d="M740 731L751 788" stroke-opacity="0.028" stroke-width="1.7"/><path d="M751 718L767 778" stroke-opacity="0.014" stroke-width="3.8"/><path d="M664 730L661 773" stroke-opacity="0.032" stroke-width="1.7"/><path d="M633 710L619 778" stroke-opacity="0.025" stroke-width="3.8"/><path d="M717 699L729 790" stroke-opacity="0.017" stroke-width="1.8"/><path d="M731 693L746 773" stroke-opacity="0.019" stroke-width="2.3"/><path d="M648 705L636 788" stroke-opacity="0.016" stroke-width="2.4"/><path d="M752 697L769 759" stroke-opacity="0.029" stroke-width="2.9"/><path d="M730 712L746 805" stroke-opacity="0.014" stroke-width="3.5"/><path d="M695 717L698 806" stroke-opacity="0.021" stroke-width="2.8"/><path d="M968 485L1013 490" stroke-opacity="0.031" stroke-width="3.3"/><path d="M942 475L1014 480" stroke-opacity="0.013" stroke-width="1.8"/><path d="M951 390L1002 378" stroke-opacity="0.016" stroke-width="1.7"/><path d="M959 508L1023 520" stroke-opacity="0.018" stroke-width="2.1"/><path d="M944 425L1005 418" stroke-opacity="0.022" stroke-width="2.2"/><path d="M959 527L1012 541" stroke-opacity="0.018" stroke-width="3.9"/><path d="M940 428L998 422" stroke-opacity="0.021" stroke-width="2.7"/><path d="M934 455L1022 456" stroke-opacity="0.012" stroke-width="2.2"/><path d="M912 578L963 607" stroke-opacity="0.013" stroke-width="2.3"/><path d="M905 605L964 645" stroke-opacity="0.029" stroke-width="3.1"/><path d="M851 680L882 722" stroke-opacity="0.020" stroke-width="4.0"/><path d="M919 595L979 631" stroke-opacity="0.013" stroke-width="3.6"/><path d="M816 689L855 757" stroke-opacity="0.031" stroke-width="1.8"/><path d="M868 644L929 707" stroke-opacity="0.031" stroke-width="3.6"/><path d="M871 664L914 712" stroke-opacity="0.028" stroke-width="2.1"/><path d="M906 564L981 601" stroke-opacity="0.014" stroke-width="3.6"/><path d="M502 258L452 204" stroke-opacity="0.028" stroke-width="2.7"/><path d="M439 329L376 297" stroke-opacity="0.024" stroke-width="2.8"/><path d="M531 267L466 187" stroke-opacity="0.018" stroke-width="1.7"/><path d="M466 292L425 262" stroke-opacity="0.029" stroke-width="3.9"/><path d="M502 274L447 219" stroke-opacity="0.028" stroke-width="3.4"/><path d="M509 251L477 214" stroke-opacity="0.015" stroke-width="2.1"/><path d="M535 250L484 181" stroke-opacity="0.012" stroke-width="1.7"/><path d="M468 294L408 249" stroke-opacity="0.028" stroke-width="2.2"/></g>
<ellipse cx="0" cy="0" rx="200" ry="150" fill="url(#gBlob)" transform="translate(632 418) rotate(40)"/>
<ellipse cx="0" cy="0" rx="245" ry="44" fill="url(#gRidge)" transform="translate(590 476) rotate(46.5)"/>
<ellipse cx="0" cy="0" rx="42" ry="17" fill="url(#gPk)" transform="translate(456 331) rotate(40)"/>
</g>
<rect x="282.5" y="51.5" width="803" height="803" fill="none" stroke="#fff" stroke-opacity=".3" stroke-width="1"/>
<circle cx="437" cy="318" r="4" fill="#3f1152" opacity=".8"/>
<rect x="435.6" y="315.3" width="2.8" height="5" rx="1" fill="#d9a070"/>
<rect x="436.3" y="316" width="1.4" height="2.6" fill="#ecd8c0"/>
<circle cx="685" cy="455" r="363" fill="none" stroke="#1414f8" stroke-width="4.3"/>
<circle cx="685" cy="455" r="272" fill="none" stroke="#14861a" stroke-width="4.3"/>
<g fill="none" stroke="#f2262c" stroke-opacity=".88" stroke-width="3.8">
<circle cx="682" cy="183" r="25.3"/>
<circle cx="445.4" cy="322.4" r="25.4"/>
<circle cx="449" cy="594" r="25.3"/>
</g>
</svg>
<div class="t " style="left:292.2px;top:875.7px;font-size:11.5px;letter-spacing:-.45px">phase</div>
<div class="a " style="left:332px;top:873px;width:15px;height:15px;background:#414851;border-radius:2px"><svg style="left:4px;top:3px" width="8" height="10"><path d="M0 0L7 4.7L0 9.4Z" fill="#d1d2d4"/></svg></div>
<div class="a " style="left:351px;top:873px;width:13px;height:15px;background:#414851;border-radius:2px"><svg style="left:3px;top:3.5px" width="8" height="9"><path d="M7 0L1.4 4L7 8Z M0 0H1.6V8H0Z" fill="#d1d2d4"/></svg></div>
<div class="a " style="left:367.5px;top:873.25px;width:676.5px;height:14.5px;background:#414851;border-radius:2px"></div>
<div class="a " style="left:367.5px;top:873.25px;width:225.5px;height:14.5px;background:#6a7380;border-radius:2px"></div>
<div class="a " style="left:1047px;top:873px;width:13px;height:15px;background:#414851;border-radius:2px"><svg style="left:3px;top:3.5px" width="8" height="9"><path d="M0 0L5.6 4L0 8Z M5.4 0H7V8H5.4Z" fill="#d1d2d4"/></svg></div>
<div class="t " style="left:1065px;top:873.4px;font-size:16px;color:#868e93;transform:scaleX(.9);transform-origin:0 0">0</div>
<div class="a " style="left:1079px;top:874px;width:1px;height:14px;background:#5a626c"></div>
<div class="t " style="left:1087px;top:873.4px;font-size:16px;color:#868e93;transform:scaleX(.9);transform-origin:0 0">2</div>
<div class="t " style="left:295.6px;top:899.7px;font-size:11.5px;letter-spacing:-.45px">angle</div>
<div class="a " style="left:332px;top:897px;width:15px;height:15px;background:#414851;border-radius:2px"><svg style="left:4px;top:3px" width="8" height="10"><path d="M0 0L7 4.7L0 9.4Z" fill="#d1d2d4"/></svg></div>
<div class="a " style="left:351px;top:897px;width:13px;height:15px;background:#414851;border-radius:2px"><svg style="left:3px;top:3.5px" width="8" height="9"><path d="M7 0L1.4 4L7 8Z M0 0H1.6V8H0Z" fill="#d1d2d4"/></svg></div>
<div class="a " style="left:367.5px;top:897.25px;width:676.5px;height:14.5px;background:#414851;border-radius:2px"></div>
<div class="a " style="left:367.5px;top:897.25px;width:225.5px;height:14.5px;background:#6a7380;border-radius:2px"></div>
<div class="a " style="left:1047px;top:897px;width:13px;height:15px;background:#414851;border-radius:2px"><svg style="left:3px;top:3.5px" width="8" height="9"><path d="M0 0L5.6 4L0 8Z M5.4 0H7V8H5.4Z" fill="#d1d2d4"/></svg></div>
<div class="t " style="left:1065px;top:897.4px;font-size:16px;color:#868e93;transform:scaleX(.9);transform-origin:0 0">0</div>
<div class="a " style="left:1079px;top:898px;width:1px;height:14px;background:#5a626c"></div>
<div class="t " style="left:1087px;top:897.4px;font-size:16px;color:#868e93;transform:scaleX(.9);transform-origin:0 0">2</div>
<div class="a " style="left:1111px;top:23px;width:2px;height:894px;background:#414851"></div>
<div class="a " style="left:1113px;top:322px;width:350px;height:2px;background:#414851"></div>
<div class="t " style="left:1125.4px;top:58.0px;font-size:10.7px;">input image</div>
<div class="a cmb" style="left:1215px;top:52px;width:239px;height:22px;"></div>
<div class="t " style="left:1223.3px;top:58.7px;font-size:10.7px;letter-spacing:-.16px">TIRF_Tubulin_525nm</div>
<svg style="left:1434.6px;top:59.2px" width="13" height="8"><path d="M0 0H12.7L6.35 7.7Z" fill="#868e93"/></svg>
<div class="t " style="left:1125.4px;top:86.0px;font-size:10.7px;">input order</div>
<div class="a cmb" style="left:1215px;top:80px;width:239px;height:22px;"></div>
<div class="t " style="left:1223.3px;top:86.7px;font-size:10.7px;letter-spacing:-.16px">apzyx</div>
<svg style="left:1434.6px;top:87.2px" width="13" height="8"><path d="M0 0H12.7L6.35 7.7Z" fill="#868e93"/></svg>
<div class="t " style="left:1125.4px;top:112.9px;font-size:10.7px;">angles</div>
<div class="a spin" style="left:1215px;top:108px;width:239px;height:20px;"></div>
<svg style="left:1220px;top:117px" width="10" height="2"><rect width="9.8" height="1.7" fill="#7c848b"/></svg>
<svg style="left:1439.2px;top:113px" width="10" height="10"><path d="M0 4.9H9.8M4.9 0V9.8" stroke="#868e93" stroke-width="1.5"/></svg>
<div class="t " style="left:1247px;top:114.0px;font-size:10.7px;">3</div>
<div class="t " style="left:1125.4px;top:138.9px;font-size:10.7px;">phases</div>
<div class="a spin" style="left:1215px;top:134px;width:239px;height:20px;"></div>
<svg style="left:1220px;top:143px" width="10" height="2"><rect width="9.8" height="1.7" fill="#7c848b"/></svg>
<svg style="left:1439.2px;top:139px" width="10" height="10"><path d="M0 4.9H9.8M4.9 0V9.8" stroke="#868e93" stroke-width="1.5"/></svg>
<div class="t " style="left:1247px;top:140.0px;font-size:10.7px;">3</div>
<div class="t " style="left:1125.4px;top:164.9px;font-size:10.7px;">z</div>
<div class="a spin" style="left:1215px;top:160px;width:239px;height:20px;"></div>
<svg style="left:1220px;top:169px" width="10" height="2"><rect width="9.8" height="1.7" fill="#7c848b"/></svg>
<svg style="left:1439.2px;top:165px" width="10" height="10"><path d="M0 4.9H9.8M4.9 0V9.8" stroke="#868e93" stroke-width="1.5"/></svg>
<div class="t " style="left:1247px;top:166.0px;font-size:10.7px;">1</div>
<div class="t " style="left:1125.4px;top:190.9px;font-size:10.7px;">y</div>
<div class="a spin" style="left:1215px;top:186px;width:239px;height:20px;"></div>
<svg style="left:1220px;top:195px" width="10" height="2"><rect width="9.8" height="1.7" fill="#7c848b"/></svg>
<svg style="left:1439.2px;top:191px" width="10" height="10"><path d="M0 4.9H9.8M4.9 0V9.8" stroke="#868e93" stroke-width="1.5"/></svg>
<div class="t " style="left:1247px;top:192.0px;font-size:10.7px;">256</div>
<div class="t " style="left:1125.4px;top:216.9px;font-size:10.7px;">x</div>
<div class="a spin" style="left:1215px;top:212px;width:239px;height:20px;"></div>
<svg style="left:1220px;top:221px" width="10" height="2"><rect width="9.8" height="1.7" fill="#7c848b"/></svg>
<svg style="left:1439.2px;top:217px" width="10" height="10"><path d="M0 4.9H9.8M4.9 0V9.8" stroke="#868e93" stroke-width="1.5"/></svg>
<div class="t " style="left:1247px;top:218.0px;font-size:10.7px;">256</div>
<div class="a btn" style="left:1122px;top:238px;width:332px;height:21px;"></div>
<div class="t " style="left:0px;top:244.1px;font-size:10.7px;left:1122px;width:332px;text-align:center">Reshape stack</div>
<div class="t " style="left:1134.3px;top:367.6px;font-size:10.7px;">image</div>
<div class="a cmb" style="left:1185px;top:362px;width:260px;height:22px;"></div>
<div class="t " style="left:1193.3px;top:368.7px;font-size:10.7px;letter-spacing:-.16px">TIRF_Tubulin_525nm</div>
<svg style="left:1425.7px;top:369.2px" width="13" height="8"><path d="M0 0H12.7L6.35 7.7Z" fill="#868e93"/></svg>
<div class="a btn" style="left:1131px;top:390px;width:314px;height:21px;"></div>
<div class="t " style="left:0px;top:396.1px;font-size:10.7px;left:1131px;width:314px;text-align:center">Select image layer</div>
<div class="a spin" style="left:1122px;top:426px;width:110px;height:20px;"></div>
<svg style="left:1127px;top:435px" width="10" height="2"><rect width="9.8" height="1.7" fill="#7c848b"/></svg>
<svg style="left:1217.2px;top:431px" width="10" height="10"><path d="M0 4.9H9.8M4.9 0V9.8" stroke="#868e93" stroke-width="1.5"/></svg>
<div class="t " style="left:1154px;top:432.0px;font-size:10.7px;">3</div>
<div class="t " style="left:1241.3px;top:431.5px;font-size:10.7px;">phases</div>
<div class="a spin" style="left:1122px;top:452px;width:110px;height:20px;"></div>
<svg style="left:1127px;top:461px" width="10" height="2"><rect width="9.8" height="1.7" fill="#7c848b"/></svg>
<svg style="left:1217.2px;top:457px" width="10" height="10"><path d="M0 4.9H9.8M4.9 0V9.8" stroke="#868e93" stroke-width="1.5"/></svg>
<div class="t " style="left:1154px;top:458.0px;font-size:10.7px;">3</div>
<div class="t " style="left:1241.3px;top:457.5px;font-size:10.7px;">angles</div>
<div class="a spin" style="left:1122px;top:478px;width:110px;height:20px;"></div>
<svg style="left:1127px;top:487px" width="10" height="2"><rect width="9.8" height="1.7" fill="#7c848b"/></svg>
<svg style="left:1217.2px;top:483px" width="10" height="10"><path d="M0 4.9H9.8M4.9 0V9.8" stroke="#868e93" stroke-width="1.5"/></svg>
<div class="t " style="left:1154px;top:484.0px;font-size:10.7px;">100.000</div>
<div class="t " style="left:1241.3px;top:483.5px;font-size:10.7px;">M</div>
<div class="a spin" style="left:1122px;top:504px;width:110px;height:20px;"></div>
<svg style="left:1127px;top:513px" width="10" height="2"><rect width="9.8" height="1.7" fill="#7c848b"/></svg>
<svg style="left:1217.2px;top:509px" width="10" height="10"><path d="M0 4.9H9.8M4.9 0V9.8" stroke="#868e93" stroke-width="1.5"/></svg>
<div class="t " style="left:1154px;top:510.0px;font-size:10.7px;">1.490</div>
<div class="t " style="left:1241.3px;top:509.5px;font-size:10.7px;">NA</div>
<div class="a spin" style="left:1122px;top:530px;width:110px;height:20px;"></div>
<svg style="left:1127px;top:539px" width="10" height="2"><rect width="9.8" height="1.7" fill="#7c848b"/></svg>
<svg style="left:1217.2px;top:535px" width="10" height="10"><path d="M0 4.9H9.8M4.9 0V9.8" stroke="#868e93" stroke-width="1.5"/></svg>
<div class="t " style="left:1154px;top:536.0px;font-size:10.7px;">1.51</div>
<div class="t " style="left:1241.3px;top:535.5px;font-size:10.7px;">n</div>
<div class="a spin" style="left:1122px;top:556px;width:110px;height:20px;"></div>
<svg style="left:1127px;top:565px" width="10" height="2"><rect width="9.8" height="1.7" fill="#7c848b"/></svg>
<svg style="left:1217.2px;top:561px" width="10" height="10"><path d="M0 4.9H9.8M4.9 0V9.8" stroke="#868e93" stroke-width="1.5"/></svg>
<div class="t " style="left:1154px;top:562.0px;font-size:10.7px;">0.52 µm</div>
<div class="t " style="left:1241.3px;top:561.5px;font-size:10.7px;">λ</div>
<div class="a spin" style="left:1122px;top:582px;width:110px;height:20px;"></div>
<svg style="left:1127px;top:591px" width="10" height="2"><rect width="9.8" height="1.7" fill="#7c848b"/></svg>
<svg style="left:1217.2px;top:587px" width="10" height="10"><path d="M0 4.9H9.8M4.9 0V9.8" stroke="#868e93" stroke-width="1.5"/></svg>
<div class="t " style="left:1154px;top:588.0px;font-size:10.7px;">5.50 µm</div>
<div class="t " style="left:1241.3px;top:587.5px;font-size:10.7px;">pixel size</div>
<div class="a spin" style="left:1122px;top:608px;width:110px;height:20px;"></div>
<svg style="left:1127px;top:617px" width="10" height="2"><rect width="9.8" height="1.7" fill="#7c848b"/></svg>
<svg style="left:1217.2px;top:613px" width="10" height="10"><path d="M0 4.9H9.8M4.9 0V9.8" stroke="#868e93" stroke-width="1.5"/></svg>
<div class="t " style="left:1154px;top:614.0px;font-size:10.7px;">0.55 µm</div>
<div class="t " style="left:1241.3px;top:613.5px;font-size:10.7px;">dz</div>
<div class="a spin" style="left:1122px;top:634px;width:110px;height:20px;"></div>
<svg style="left:1127px;top:643px" width="10" height="2"><rect width="9.8" height="1.7" fill="#7c848b"/></svg>
<svg style="left:1217.2px;top:639px" width="10" height="10"><path d="M0 4.9H9.8M4.9 0V9.8" stroke="#868e93" stroke-width="1.5"/></svg>
<div class="t " style="left:1154px;top:640.0px;font-size:10.7px;">0.50</div>
<div class="t " style="left:1241.3px;top:639.5px;font-size:10.7px;">alpha</div>
<div class="a spin" style="left:1122px;top:660px;width:110px;height:20px;"></div>
<svg style="left:1127px;top:669px" width="10" height="2"><rect width="9.8" height="1.7" fill="#7c848b"/></svg>
<svg style="left:1217.2px;top:665px" width="10" height="10"><path d="M0 4.9H9.8M4.9 0V9.8" stroke="#868e93" stroke-width="1.5"/></svg>
<div class="t " style="left:1154px;top:666.0px;font-size:10.7px;">0.980</div>
<div class="t " style="left:1241.3px;top:665.5px;font-size:10.7px;">beta</div>
<div class="a spin" style="left:1122px;top:686px;width:110px;height:20px;"></div>
<svg style="left:1127px;top:695px" width="10" height="2"><rect width="9.8" height="1.7" fill="#7c848b"/></svg>
<svg style="left:1217.2px;top:691px" width="10" height="10"><path d="M0 4.9H9.8M4.9 0V9.8" stroke="#868e93" stroke-width="1.5"/></svg>
<div class="t " style="left:1154px;top:692.0px;font-size:10.7px;">0.50</div>
<div class="t " style="left:1241.3px;top:691.5px;font-size:10.7px;">w</div>
<div class="a spin" style="left:1122px;top:712px;width:110px;height:20px;"></div>
<svg style="left:1127px;top:721px" width="10" height="2"><rect width="9.8" height="1.7" fill="#7c848b"/></svg>
<svg style="left:1217.2px;top:717px" width="10" height="10"><path d="M0 4.9H9.8M4.9 0V9.8" stroke="#868e93" stroke-width="1.5"/></svg>
<div class="t " style="left:1154px;top:718.0px;font-size:10.7px;">0.750</div>
<div class="t " style="left:1241.3px;top:717.5px;font-size:10.7px;">eta</div>
<div class="a spin" style="left:1122px;top:738px;width:110px;height:20px;"></div>
<svg style="left:1127px;top:747px" width="10" height="2"><rect width="9.8" height="1.7" fill="#7c848b"/></svg>
<svg style="left:1217.2px;top:743px" width="10" height="10"><path d="M0 4.9H9.8M4.9 0V9.8" stroke="#868e93" stroke-width="1.5"/></svg>
<div class="t " style="left:1154px;top:744.0px;font-size:10.7px;">30</div>
<div class="t " style="left:1241.3px;top:743.5px;font-size:10.7px;">group</div>
<div class="a cb" style="left:1296px;top:427px;width:18px;height:18px;"><svg style="left:3px;top:4px" width="12" height="10"><path d="M1.2 5.3L4.6 8.3L10.8 1.5" fill="none" stroke="#d0d1d3" stroke-width="1.75"/></svg></div>
<div class="t " style="left:1329.3px;top:431.9px;font-size:10.7px;">Show Xcorr</div>
<div class="a cb" style="left:1296px;top:456px;width:18px;height:18px;"><svg style="left:3px;top:4px" width="12" height="10"><path d="M1.2 5.3L4.6 8.3L10.8 1.5" fill="none" stroke="#d0d1d3" stroke-width="1.75"/></svg></div>
<div class="t " style="left:1329.3px;top:460.9px;font-size:10.7px;">Show Spectrum</div>
<div class="a cb" style="left:1296px;top:484px;width:18px;height:18px;"></div>
<div class="t " style="left:1329.3px;top:488.9px;font-size:10.7px;">Show Wiener filter</div>
<div class="a cb" style="left:1296px;top:513px;width:18px;height:18px;"><svg style="left:3px;top:4px" width="12" height="10"><path d="M1.2 5.3L4.6 8.3L10.8 1.5" fill="none" stroke="#d0d1d3" stroke-width="1.75"/></svg></div>
<div class="t " style="left:1329.3px;top:517.9px;font-size:10.7px;">Show Eta circle</div>
<div class="a cb" style="left:1296px;top:541px;width:18px;height:18px;"><svg style="left:3px;top:4px" width="12" height="10"><path d="M1.2 5.3L4.6 8.3L10.8 1.5" fill="none" stroke="#d0d1d3" stroke-width="1.75"/></svg></div>
<div class="t " style="left:1329.3px;top:545.9px;font-size:10.7px;">Show Carrier</div>
<div class="a cb" style="left:1296px;top:570px;width:18px;height:18px;"></div>
<div class="t " style="left:1329.3px;top:574.9px;font-size:10.7px;">Continuos Calibration</div>
<div class="a cb" style="left:1296px;top:598px;width:18px;height:18px;"></div>
<div class="t " style="left:1329.3px;top:602.9px;font-size:10.7px;">Batch Reconstruction</div>
<div class="a cb" style="left:1296px;top:627px;width:18px;height:18px;"></div>
<div class="t " style="left:1329.3px;top:631.9px;font-size:10.7px;">Use Torch</div>
<div class="a btn" style="left:1295px;top:654px;width:159px;height:21px;"></div>
<div class="t " style="left:0px;top:660.1px;font-size:10.7px;left:1295px;width:159px;text-align:center">Widefield</div>
<div class="a btn" style="left:1295px;top:681px;width:159px;height:21px;"></div>
<div class="t " style="left:0px;top:687.1px;font-size:10.7px;left:1295px;width:159px;text-align:center">Calibrate</div>
<div class="a btn" style="left:1295px;top:708px;width:159px;height:21px;"></div>
<div class="t " style="left:0px;top:714.1px;font-size:10.7px;left:1295px;width:159px;text-align:center">Plot calibration phases</div>
<div class="a btn" style="left:1295px;top:735px;width:159px;height:21px;"></div>
<div class="t " style="left:0px;top:741.1px;font-size:10.7px;left:1295px;width:159px;text-align:center">SIM reconstruction</div>
<div class="a btn" style="left:1295px;top:762px;width:159px;height:21px;"></div>
<div class="t " style="left:0px;top:768.1px;font-size:10.7px;left:1295px;width:159px;text-align:center">Stack SIM reconstruction</div>
<div class="a btn" style="left:1295px;top:789px;width:159px;height:21px;"></div>
<div class="t " style="left:0px;top:795.1px;font-size:10.7px;left:1295px;width:159px;text-align:center">Stack demodulation</div>
<div class="a cb" style="left:1123px;top:765px;width:18px;height:18px;"><svg style="left:3px;top:4px" width="12" height="10"><path d="M1.2 5.3L4.6 8.3L10.8 1.5" fill="none" stroke="#d0d1d3" stroke-width="1.75"/></svg></div>
<div class="t " style="left:1156.4px;top:769.9px;font-size:10.7px;">use phases</div>
<div class="a cb" style="left:1123px;top:791px;width:18px;height:18px;"><svg style="left:3px;top:4px" width="12" height="10"><path d="M1.2 5.3L4.6 8.3L10.8 1.5" fill="none" stroke="#d0d1d3" stroke-width="1.75"/></svg></div>
<div class="t " style="left:1156.4px;top:795.9px;font-size:10.7px;">find carrier</div>
<div class="t " style="left:1094.3px;top:926.2px;font-size:11.5px;letter-spacing:.12px">enter a selection mode to edit shape properties</div>
<svg style="left:1379.5px;top:926px" width="14" height="8"><path d="M0 7.5L6.8 0L13.6 7.5Z" fill="#f0f1f2"/></svg>
<div class="t " style="left:1397.3px;top:926.2px;font-size:11.5px;letter-spacing:.25px">activity</div>
</body></html>
